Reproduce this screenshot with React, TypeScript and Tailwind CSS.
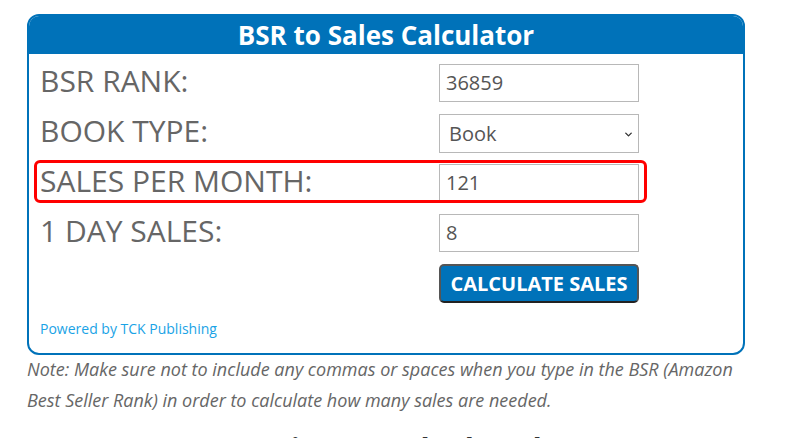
import { ChevronDown } from 'lucide-react';

export default function App() {
    const rows = [
        { label: 'BSR RANK:', value: '36859', kind: 'input' },
        { label: 'BOOK TYPE:', value: 'Book', kind: 'select' },
        { label: 'SALES PER MONTH:', value: '121', kind: 'input', marked: true },
        { label: '1 DAY SALES:', value: '8', kind: 'input' },
    ];

    return (
        <div className="w-[786px] h-[438px] overflow-hidden bg-white font-['Open_Sans',sans-serif]">
            <div className="ml-[27px] w-[718px] pt-[14px]">
                <div className="border-2 border-[#0072b9] rounded-[12px] overflow-hidden">
                    <div className="bg-[#0072b9] h-[38px] leading-[38px] text-center text-white font-bold text-[26px]">
                        BSR to Sales Calculator
                    </div>

                    <div className="pl-[11px] pt-[10px] pb-[14px]">
                        {rows.map((row) => (
                            <div key={row.label} className="relative flex h-[50px]">
                                {row.marked && (
                                    <div className="absolute -left-[6px] -top-[4px] w-[613px] h-[43px] border-[3px] border-[#ff0000] rounded-[6px]" />
                                )}
                                <div className="w-[399px] text-[30px] leading-none pt-[2px] text-[#666]">
                                    {row.label}
                                </div>
                                {row.kind === 'select' ? (
                                    <div className="relative w-[200px] h-[39px] border border-[#b8b8b8] text-[20px] text-[#555] pl-[9px] leading-[37px]">
                                        {row.value}
                                        <ChevronDown
                                            className="absolute right-[4px] top-[14px] text-[#333]"
                                            size={11}
                                            strokeWidth={3}
                                        />
                                    </div>
                                ) : (
                                    <div className="w-[200px] h-[38px] border border-[#b8b8b8] text-[20px] text-[#555] pl-[6px] leading-[36px]">
                                        {row.value}
                                    </div>
                                )}
                            </div>
                        ))}

                        <div className="flex">
                            <div className="w-[399px]" />
                            <button className="w-[200px] h-[39px] bg-[#0072b9] rounded-[5px] border-2 border-[#555] border-b-[#222] text-white font-bold text-[20px] uppercase">
                                Calculate Sales
                            </button>
                        </div>

                        <div className="mt-[15px] text-[14px] text-[#1aa3e6]">Powered by TCK Publishing</div>
                    </div>
                </div>

                <p className="-mt-[1px] italic text-[18px] leading-[31px] text-[#666]">
                    Note: Make sure not to include any commas or spaces when you type in the BSR (Amazon
                    Best Seller Rank) in order to calculate how many sales are needed.
                </p>

                <h2 className="mt-[10px] text-center font-bold text-[30px] text-[#333]">
                    How is BSR calculated?
                </h2>
            </div>
        </div>
    );
}
